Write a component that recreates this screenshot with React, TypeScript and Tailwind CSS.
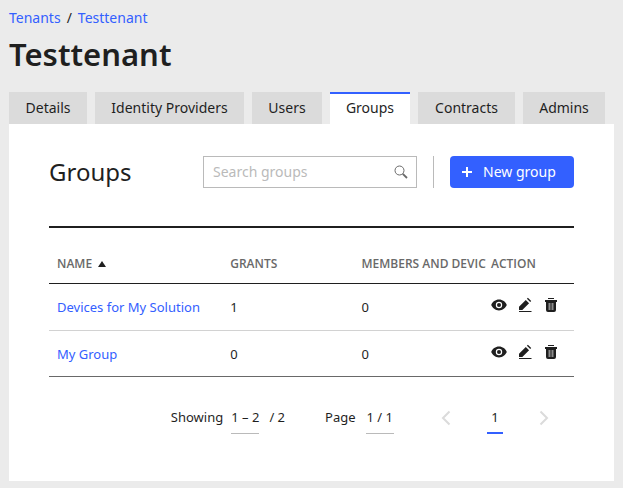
import React from 'react';

type Group = {
  id: number;
  name: string;
  grants: number;
  members: number;
};

const tabs = [
  { label: 'Details', width: 'w-[78px]' },
  { label: 'Identity Providers', width: 'w-[149px]' },
  { label: 'Users', width: 'w-[70px]' },
  { label: 'Groups', width: 'w-[80px]' },
  { label: 'Contracts', width: 'w-[97px]' },
  { label: 'Admins', width: 'w-[82px]' },
];

const groups: Group[] = [
  { id: 1, name: 'Devices for My Solution', grants: 1, members: 0 },
  { id: 2, name: 'My Group', grants: 0, members: 0 },
];

const EyeIcon = () => (
  <svg width="16" height="16" viewBox="0 0 16 16" aria-hidden="true">
    <path
      fill="currentColor"
      fillRule="evenodd"
      d="M8 2.600C4.400 2.600 1.400 5 .2 8c1.200 3 4.200 5.400 7.800 5.400s6.600-2.400 7.800-5.400C14.600 5 11.600 2.600 8 2.600Zm0 8.600a3.200 3.200 0 1 1 0-6.400 3.200 3.200 0 0 1 0 6.400Z"
    />
    <circle cx="8" cy="8" r="2" fill="currentColor" />
  </svg>
);

const PencilIcon = () => (
  <svg width="16" height="16" viewBox="0 0 16 16" aria-hidden="true">
    <path
      fill="currentColor"
      d="M2 13V9.700L8.800 2.900l3.300 3.300L5.300 13ZM9.900 1.800l1-1 3.300 3.300-1 1ZM2 14h12.500v1H2Z"
    />
  </svg>
);

const TrashIcon = () => (
  <svg width="16" height="16" viewBox="0 0 16 16" aria-hidden="true">
    <path fill="currentColor" d="M5 1h6v1H5ZM2 3h12v2H2ZM3 5h10v8a2 2 0 0 1-2 2H5a2 2 0 0 1-2-2Z" />
    <path fill="#8c8c8c" d="M5.500 6h2v7h-2ZM8.500 6h2v7h-2Z" />
  </svg>
);

const Chevron = ({ points }: { points: string }) => (
  <svg width="16" height="16" viewBox="0 0 16 16" aria-hidden="true">
    <polyline points={points} fill="none" stroke="currentColor" strokeWidth="2" />
  </svg>
);

function Tabs({ active }: { active: string }) {
  return (
    <nav className="flex gap-2" role="tablist">
      {tabs.map((tab) => (
        <button
          key={tab.label}
          role="tab"
          aria-selected={tab.label === active}
          className={`${tab.width} h-8 border-t-2 pb-0.5 whitespace-nowrap ${
            tab.label === active ? 'border-[#3360ff] bg-white' : 'border-[#dbdbdb] bg-[#dbdbdb]'
          }`}
        >
          {tab.label}
        </button>
      ))}
    </nav>
  );
}

function GroupTable() {
  return (
    <table className="mt-[38px] w-full table-fixed border-collapse border-t-2 border-[#1f1f1f] text-left text-[13px]">
      <thead>
        <tr className="h-14 border-b border-[#1f1f1f] font-['Open_Sans','Noto_Sans',sans-serif] text-xs text-[#696969]">
          <th className="w-[33%] px-2 pt-[18px] font-semibold">
            <span className="flex items-center gap-1.5">
              NAME
              <svg width="8" height="6" viewBox="0 0 8 6" className="text-[#1f1f1f]" aria-hidden="true">
                <path d="M4 0 8 6H0Z" fill="currentColor" />
              </svg>
            </span>
          </th>
          <th className="w-[25%] px-2 pt-[18px] font-semibold">GRANTS</th>
          <th className="pt-[18px] pl-2 font-semibold whitespace-nowrap">MEMBERS AND DEVIC</th>
          <th className="w-[91px] px-2 pt-[18px] font-semibold">ACTION</th>
        </tr>
      </thead>
      <tbody>
        {groups.map((group) => (
          <tr
            key={group.id}
            className="h-[47px] border-b border-[#d2d2d2] last:h-[46px] last:border-[#696969]"
          >
            <td className="px-2 pt-0.5">
              <a href="#" className="text-[#3360ff]">
                {group.name}
              </a>
            </td>
            <td className="px-2 pt-0.5">{group.grants}</td>
            <td className="px-2 pt-0.5">{group.members}</td>
            <td className="px-2 pt-[13px] align-top">
              <div className="flex gap-2.5">
                <button aria-label={`View ${group.name}`}>
                  <EyeIcon />
                </button>
                <button aria-label={`Edit ${group.name}`}>
                  <PencilIcon />
                </button>
                <button aria-label={`Delete ${group.name}`}>
                  <TrashIcon />
                </button>
              </div>
            </td>
          </tr>
        ))}
      </tbody>
    </table>
  );
}

function Pagination() {
  return (
    <footer className="mt-[25px] flex h-8 items-stretch justify-end pr-[22px] text-[13px] leading-[30px]">
      <span>Showing</span>
      <button className="ml-2 flex border-b border-[#bababa]">1 – 2</button>
      <span className="ml-2.5">/ 2</span>
      <span className="ml-10">Page</span>
      <button className="ml-2.5 flex border-b border-[#bababa] px-px">1 / 1</button>
      <button className="ml-11 text-[#dbdbdb]" aria-label="Previous page">
        <Chevron points="11.5,1.5 5,8 11.5,14.5" />
      </button>
      <button
        className="ml-[33px] flex w-4 justify-center border-b-2 border-[#3360ff]"
        aria-current="page"
      >
        1
      </button>
      <button className="ml-[33px] text-[#dbdbdb]" aria-label="Next page">
        <Chevron points="4.5,1.5 11,8 4.5,14.5" />
      </button>
    </footer>
  );
}

export default function App() {
  return (
    <div className="min-h-screen bg-[#ebebeb] px-[9px] pt-2 pb-[7px] font-['Noto_Sans','Open_Sans',sans-serif] text-sm text-[#1f1f1f]">
      <nav className="flex gap-1.5 leading-5" aria-label="Breadcrumb">
        <a href="#" className="text-[#3360ff]">
          Tenants
        </a>
        <span>/</span>
        <a href="#" className="text-[#3360ff]">
          Testtenant
        </a>
      </nav>
      <h1 className="mt-1 mb-4 text-[31px] leading-[44px] font-semibold">Testtenant</h1>

      <Tabs active="Groups" />
      <main className="bg-white px-10 pt-8 pb-[47px]">
        <div className="flex h-8 items-center">
          <h2 className="flex-1 text-2xl">Groups</h2>
          <label className="flex h-8 w-[214px] items-center border border-[#bababa] pr-2 pl-[9px]">
            <input
              type="text"
              aria-label="Search groups"
              placeholder="Search groups"
              className="min-w-0 flex-1 outline-none placeholder:text-[#bababa]"
            />
            <svg width="14" height="14" viewBox="0 0 14 14" fill="none" stroke="#696969" aria-hidden="true">
              <circle cx="5.500" cy="5.500" r="4.500" strokeWidth="1" />
              <path d="M8.800 8.800 13 13" strokeWidth="1.800" />
            </svg>
          </label>
          <div className="mx-4 h-8 w-px bg-[#bababa]" />
          <button className="flex h-8 w-[124px] items-center gap-2.5 rounded bg-[#3360ff] pl-[11px] whitespace-nowrap text-white">
            <svg width="12" height="12" viewBox="0 0 12 12" aria-hidden="true">
              <path d="M5 1h2v4h4v2H7v4H5V7H1V5h4Z" fill="currentColor" />
            </svg>
            New group
          </button>
        </div>
        <GroupTable />
        <Pagination />
      </main>
    </div>
  );
}
